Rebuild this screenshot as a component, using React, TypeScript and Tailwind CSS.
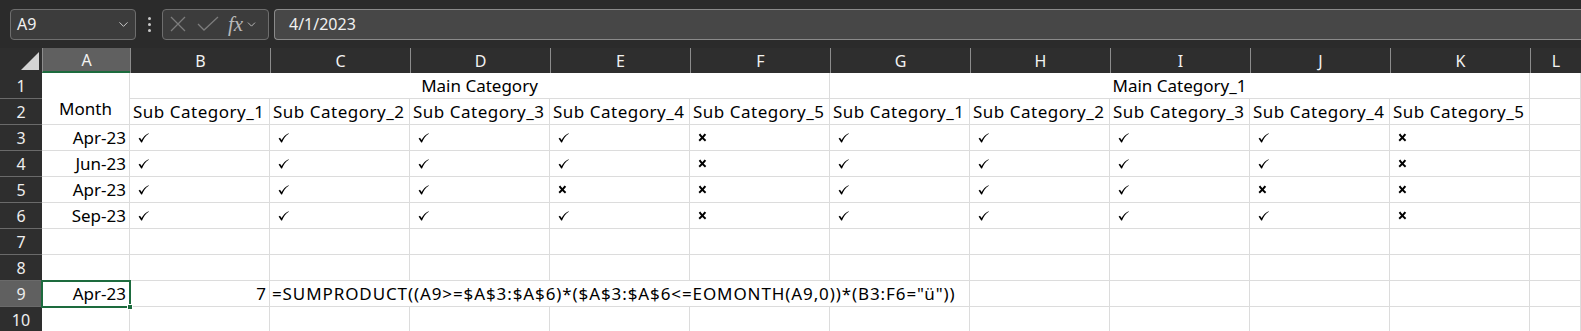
import { ChevronDown } from "lucide-react";

const COLS = ["B", "C", "D", "E", "F", "G", "H", "I", "J", "K"];

const rows: { month: string; marks: string }[] = [
  { month: "Apr-23", marks: "vvvvxvvvvx" },
  { month: "Jun-23", marks: "vvvvxvvvvx" },
  { month: "Apr-23", marks: "vvvxxvvvxx" },
  { month: "Sep-23", marks: "vvvvxvvvvx" },
];

const font = { fontFamily: '"Noto Sans", "Open Sans", sans-serif' };

const Check = () => (
  <svg width="11" height="10" viewBox="0 0 11 10" className="shrink-0">
    <path
      d="M0.6 5.6 L2 4.7 L3.6 7 C5.2 4.2 7.4 1.8 10.6 0.3 L10.8 0.7 C7.8 2.6 5.6 5.4 4 9.6 L3.2 9.6 Z"
      fill="#000"
    />
  </svg>
);

const Cross = () => (
  <svg width="9" height="9" viewBox="0 0 9 9" className="shrink-0">
    <path d="M1.5 1.2 C3 3 5 5.6 7.6 7.8" stroke="#000" strokeWidth="2" fill="none" />
    <path d="M7.4 1.2 C6 3 3.6 5.6 1.2 7.8" stroke="#000" strokeWidth="2" fill="none" />
  </svg>
);

const Toolbar = () => (
  <div className="h-[48px] bg-[#2b2b2b] flex items-center pl-[10px]" style={font}>
    <div className="w-[126px] h-[31px] rounded-[4px] bg-[#3c3c3c] border border-[#6e6e6e] flex items-center justify-between pl-[6px] pr-[4px] text-[16px] text-[#f0f0f0]">
      <span>A9</span>
      <ChevronDown className="w-[15px] h-[15px] text-[#c8c8c8]" strokeWidth={1.6} />
    </div>
    <div className="w-[26px] flex flex-col items-center gap-[3px]">
      <span className="w-[3px] h-[3px] bg-[#c8c8c8] rounded-full" />
      <span className="w-[3px] h-[3px] bg-[#c8c8c8] rounded-full" />
      <span className="w-[3px] h-[3px] bg-[#c8c8c8] rounded-full" />
    </div>
    <div className="w-[107px] h-[31px] rounded-[4px] bg-[#3c3c3c] border border-[#6e6e6e] flex items-center pl-[7px] pr-[2px]">
      <svg width="16" height="16" viewBox="0 0 16 16">
        <path d="M1 1 L15 15 M15 1 L1 15" stroke="#7c7c7c" strokeWidth="1.3" />
      </svg>
      <svg width="22" height="16" viewBox="0 0 22 16" className="ml-[11px]">
        <path d="M1 8 L7 14 L21 1" stroke="#7c7c7c" strokeWidth="1.3" fill="none" />
      </svg>
      <span
        className="ml-[9px] text-[21px] italic text-[#b8b8b8] leading-none"
        style={{ fontFamily: '"Liberation Serif", serif' }}
      >
        fx
      </span>
      <ChevronDown className="w-[13px] h-[13px] text-[#c8c8c8] ml-[2px]" strokeWidth={1.6} />
    </div>
    <div className="ml-[5px] flex-1 h-[31px] rounded-l-[4px] bg-[#474747] border border-r-0 border-[#8a8a8a] flex items-center pl-[14px] text-[16px] text-[#f0f0f0]">
      4/1/2023
    </div>
  </div>
);

const Cell = ({ children, className = "" }: { children?: React.ReactNode; className?: string }) => (
  <div className={`border-r border-b border-[#dcdcdc] flex items-center overflow-visible whitespace-nowrap ${className}`}>
    {children}
  </div>
);

const RowHead = ({ n, active = false }: { n: number; active?: boolean }) => (
  <div
    className={`border-b border-[#6a6a6a] flex items-center justify-center text-[16px] text-[#eeeeee] ${
      active ? "bg-[#606060]" : "bg-[#2e2e2e]"
    }`}
  >
    {n}
  </div>
);

export default function App() {
  return (
    <div className="w-[1581px] h-[331px] overflow-hidden bg-white" style={font}>
      <Toolbar />
      <div className="grid grid-cols-[42px_88px_repeat(10,140px)_1fr] grid-rows-[25px_repeat(10,26px)] text-[17px] text-black">
        {/* header row */}
        <div className="bg-[#2e2e2e] flex items-end justify-end pr-[3px] pb-[3px]">
          <svg width="18" height="18" viewBox="0 0 18 18">
            <path d="M18 0 L18 18 L0 18 Z" fill="#d4d4d4" />
          </svg>
        </div>
        <div className="bg-[#606060] border-b-2 border-[#1d6b3e] border-l border-l-[#8c8c8c] flex items-center justify-center text-[16px] text-[#f2f2f2]">
          A
        </div>
        {[...COLS, "L"].map((c) => (
          <div
            key={c}
            className="bg-[#2e2e2e] border-l border-[#8c8c8c] flex items-center justify-center text-[16px] text-[#f2f2f2]"
          >
            {c}
          </div>
        ))}

        {/* row 1 */}
        <RowHead n={1} />
        <Cell className="row-span-2 justify-center items-end pb-[3px]">Month</Cell>
        <Cell className="col-span-5 justify-center">Main Category</Cell>
        <Cell className="col-span-5 justify-center">Main Category_1</Cell>
        <Cell />

        {/* row 2 */}
        <RowHead n={2} />
        {COLS.map((c, i) => (
          <Cell key={c} className="pl-[3px] tracking-[0.5px]">
            Sub Category_{(i % 5) + 1}
          </Cell>
        ))}
        <Cell />

        {rows.map((r, ri) => (
          <div key={ri} className="contents">
            <RowHead n={ri + 3} />
            <Cell className="justify-end pr-[3px]">{r.month}</Cell>
            {r.marks.split("").map((m, i) => (
              <Cell key={i} className="pl-[8px]">
                {m === "v" ? <Check /> : <Cross />}
              </Cell>
            ))}
            <Cell />
          </div>
        ))}

        {[7, 8].map((n) => (
          <div key={n} className="contents">
            <RowHead n={n} />
            <Cell />
            {COLS.map((c) => (
              <Cell key={c} />
            ))}
            <Cell />
          </div>
        ))}

        {/* row 9 */}
        <RowHead n={9} active />
        <Cell className="justify-end pr-[3px] relative">
          Apr-23
          <div className="absolute -left-[1px] -top-[1px] w-[90px] h-[28px] border-2 border-[#1d6b3e] pointer-events-none" />
          <div className="absolute -right-[4px] -bottom-[4px] w-[6px] h-[6px] bg-[#1d6b3e] border border-white" />
        </Cell>
        <Cell className="justify-end pr-[3px]">7</Cell>
        <div className="col-span-9 border-b border-[#dcdcdc] flex items-center pl-[2px] whitespace-nowrap relative tracking-[0.9px]">
          {'=SUMPRODUCT((A9>=$A$3:$A$6)*($A$3:$A$6<=EOMONTH(A9,0))*(B3:F6="ü"))'}
          <div className="absolute inset-0 grid grid-cols-[repeat(9,140px)] pointer-events-none">
            {COLS.slice(1).map((c, i) => (
              <div key={c} className={i >= 4 ? "border-r border-[#dcdcdc]" : ""} />
            ))}
          </div>
        </div>
        <Cell />

        {/* row 10 */}
        <RowHead n={10} />
        <Cell />
        {COLS.map((c) => (
          <Cell key={c} />
        ))}
        <Cell />
      </div>
    </div>
  );
}
